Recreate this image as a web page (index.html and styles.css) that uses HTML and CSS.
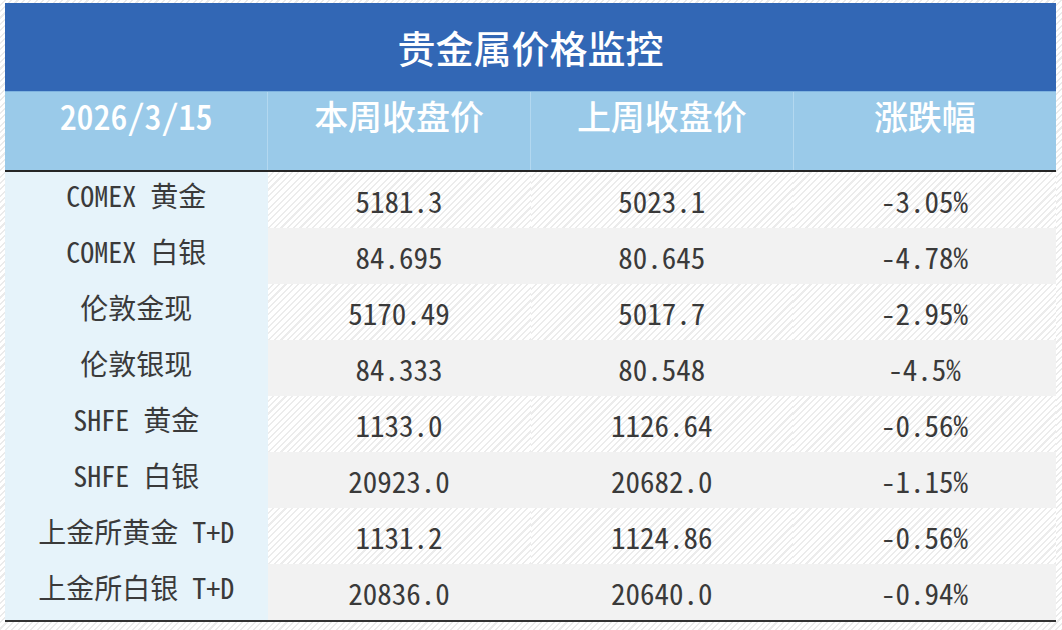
FILE: index.html
```html
<!DOCTYPE html>
<html lang="zh-CN">
<head>
<meta charset="utf-8">
<title>贵金属价格监控</title>
<link rel="stylesheet" href="styles.css">
</head>
<body>
<div class="page">
  <table class="monitor">
    <colgroup>
      <col class="c-label"><col><col><col>
    </colgroup>
    <thead>
      <tr><th class="title" colspan="4">贵金属价格监控</th></tr>
      <tr class="head">
        <th>2026/3/15</th>
        <th>本周收盘价</th>
        <th>上周收盘价</th>
        <th>涨跌幅</th>
      </tr>
    </thead>
    <tbody>
      <tr class="hatch"><td class="label">COMEX 黄金</td><td>5181.3</td><td>5023.1</td><td>-3.05%</td></tr>
      <tr class="plain"><td class="label">COMEX 白银</td><td>84.695</td><td>80.645</td><td>-4.78%</td></tr>
      <tr class="hatch"><td class="label">伦敦金现</td><td>5170.49</td><td>5017.7</td><td>-2.95%</td></tr>
      <tr class="plain"><td class="label">伦敦银现</td><td>84.333</td><td>80.548</td><td>-4.5%</td></tr>
      <tr class="hatch"><td class="label">SHFE 黄金</td><td>1133.0</td><td>1126.64</td><td>-0.56%</td></tr>
      <tr class="plain"><td class="label">SHFE 白银</td><td>20923.0</td><td>20682.0</td><td>-1.15%</td></tr>
      <tr class="hatch"><td class="label">上金所黄金 T+D</td><td>1131.2</td><td>1124.86</td><td>-0.56%</td></tr>
      <tr class="plain"><td class="label">上金所白银 T+D</td><td>20836.0</td><td>20640.0</td><td>-0.94%</td></tr>
    </tbody>
  </table>
</div>
</body>
</html>
```

FILE: styles.css
```css
html, body {
  margin: 0;
  padding: 0;
}
body {
  width: 1062px;
  height: 630px;
  overflow: hidden;
  background: repeating-linear-gradient(135deg, #ffffff 0 3px, #ebebeb 3px 4.5px);
  font-family: "Noto Sans CJK SC", "Noto Sans", sans-serif;
  font-feature-settings: "hwid" 1;
}
.page {
  padding: 3px 6px 0 5px;
}
.monitor {
  width: 1051px;
  border-collapse: collapse;
  border-spacing: 0;
  table-layout: fixed;
}
.monitor th,
.monitor td {
  padding: 0;
  text-align: center;
  box-sizing: border-box;
}
.title {
  height: 88px;
  background: #3267b5;
  color: #ffffff;
  font-size: 38px;
  font-weight: 500;
  line-height: 88px;
  border-bottom: 1px solid #7fb3df;
}
.head th {
  height: 79px;
  background: #9acae9;
  color: #ffffff;
  font-size: 34px;
  font-weight: 500;
  line-height: 48px;
  vertical-align: top;
  border-left: 1px solid #b3d8f0;
  border-bottom: 2px solid #262626;
}
.head th:first-child {
  border-left: none;
}
tbody td {
  height: 56px;
  color: #3a3a3a;
  font-size: 29px;
  line-height: 54px;
  vertical-align: middle;
}
tbody tr:last-child td {
  border-bottom: 2px solid #333333;
}
.hatch td {
  background: repeating-linear-gradient(135deg, #ffffff 0 3px, #ececec 3px 4.5px);
}
.plain td {
  background: #f2f2f2;
}
.monitor td.label {
  background: #e6f3fa;
  font-size: 28px;
  line-height: 46px;
  padding-bottom: 10px;
}
```
